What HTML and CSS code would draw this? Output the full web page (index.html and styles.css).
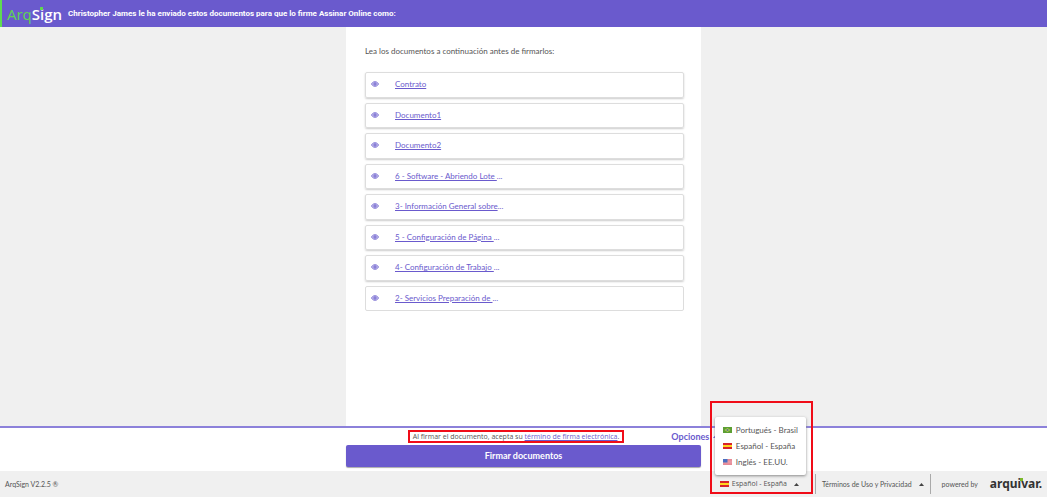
FILE: index.html
```html
<!DOCTYPE html>
<html lang="es">
<head>
<meta charset="utf-8">
<title>ArqSign</title>
<link rel="stylesheet" href="styles.css">
</head>
<body>
<svg class="symbols" aria-hidden="true">
  <symbol id="eye" viewBox="0 0 16 12"><path d="M1 6C3 2.500 5 1.500 8 1.500S13 2.500 15 6C13 9.500 11 10.500 8 10.500S3 9.500 1 6Z" fill="#d9d6f4" stroke="#766bd0" stroke-width="1.800"/><circle cx="8" cy="6" r="2.600" fill="#9d95df" stroke="#766bd0" stroke-width="1.600"/></symbol>
  <symbol id="spain" viewBox="0 0 18 12"><path fill="#d9232b" d="M0 0h18v12H0z"/><path fill="#ffd51f" d="M0 4h18v4H0z"/></symbol>
  <symbol id="brazil" viewBox="0 0 18 12"><path fill="#5c9f34" d="M0 0h18v12H0z"/><path fill="#b9c850" d="M9 2L15 6L9 10L3 6Z"/><circle cx="9" cy="6" r="2.200" fill="#4f7d8c"/></symbol>
  <symbol id="usa" viewBox="0 0 18 12"><path fill="#f3c5cc" d="M0 0h18v12H0z"/><path stroke="#dc5566" stroke-width="1.200" d="M0 .8h18M0 3.400h18M0 6h18M0 8.600h18M0 11.200h18"/><path fill="#4a6fc0" d="M0 0h9v7H0z"/></symbol>
  <symbol id="caret" viewBox="0 0 10 6"><path fill="currentColor" d="M0 6L5 0L10 6Z"/></symbol>
</svg>
<header class="topbar">
  <a class="logo" href="#"><span class="logo-arq">Arq</span><span class="logo-sign">Sign</span><i class="dot logo-dot"></i></a>
  <h1 class="topbar-title">Christopher James le ha enviado estos documentos para que lo firme Assinar Online como:</h1>
</header>
<main class="main">
  <section class="panel">
    <p class="intro">Lea los documentos a continuación antes de firmarlos:</p>
    <ul class="docs">
      <li class="doc"><svg class="eye"><use href="#eye"/></svg><a href="#">Contrato</a></li>
      <li class="doc"><svg class="eye"><use href="#eye"/></svg><a href="#">Documento1</a></li>
      <li class="doc"><svg class="eye"><use href="#eye"/></svg><a href="#">Documento2</a></li>
      <li class="doc"><svg class="eye"><use href="#eye"/></svg><a href="#">6 - Software - Abriendo Lote&nbsp;</a>...</li>
      <li class="doc"><svg class="eye"><use href="#eye"/></svg><a href="#">3- Información General sobre</a>...</li>
      <li class="doc"><svg class="eye"><use href="#eye"/></svg><a href="#">5 - Configuración de Página&nbsp;</a>...</li>
      <li class="doc"><svg class="eye"><use href="#eye"/></svg><a href="#">4- Configuración de Trabajo&nbsp;</a>...</li>
      <li class="doc"><svg class="eye"><use href="#eye"/></svg><a href="#">2- Servicios Preparación de&nbsp;</a>...</li>
    </ul>
  </section>
</main>
<section class="signbar">
  <div class="signbar-row">
    <p class="terms">Al firmar el documento, acepta su <a href="#">término de firma electrónica</a>.</p>
    <button class="options" type="button">Opciones <svg class="caret"><use href="#caret"/></svg></button>
  </div>
  <button class="sign" type="button">Firmar documentos</button>
</section>
<footer class="footer">
  <span class="version">ArqSign V2.2.5 ®</span>
  <div class="language">
    <button class="footer-button language-button" type="button"><svg class="flag"><use href="#spain"/></svg>Español - España<svg class="caret"><use href="#caret"/></svg></button>
    <div class="highlight">
      <div class="menu">
        <button class="menu-item" type="button"><svg class="flag"><use href="#brazil"/></svg>Portugués - Brasil</button>
        <button class="menu-item" type="button"><svg class="flag"><use href="#spain"/></svg>Español - España</button>
        <button class="menu-item" type="button"><svg class="flag"><use href="#usa"/></svg>Inglés - EE.UU.</button>
      </div>
    </div>
  </div>
  <button class="footer-button privacy" type="button">Términos de Uso y Privacidad<svg class="caret"><use href="#caret"/></svg></button>
  <div class="powered">powered by <a class="arquivar" href="#">arquivar.<i class="dot arquivar-dot"></i></a></div>
</footer>
</body>
</html>
```
FILE: styles.css
```css
* { box-sizing: border-box; }
body {
  margin: 0;
  min-height: 100vh;
  display: flex;
  flex-direction: column;
  background: #f0f0f0;
  color: #555;
  font: 8px/12px Lato, sans-serif;
}
h1, p, ul { margin: 0; padding: 0; }
button { margin: 0; padding: 0; border: 0; background: none; color: inherit; font: inherit; white-space: nowrap; }
a { color: #6a5acd; }
.symbols { position: absolute; width: 0; height: 0; }

.topbar {
  height: 27px;
  display: flex;
  align-items: center;
  gap: 6px;
  padding-left: 5px;
  border-left: 2px solid #5fdc50;
  background: #6a5acd;
  color: #fff;
}
.logo { position: relative; font: 15px/24px "Open Sans", sans-serif; text-decoration: none; }
.logo-arq { color: #5fd750; }
.logo-sign { color: #fff; font-weight: 600; }
.topbar-title { font: bold 8px/12px Roboto, sans-serif; }

.main { flex: 1; display: flex; justify-content: center; }
.panel { width: 355px; padding: 18px 17px 0 19px; background: #fff; }
.docs {
  height: 239px;
  margin-top: 15px;
  display: grid;
  grid-auto-rows: 1fr;
  gap: 5px;
  list-style: none;
}
.doc {
  display: flex;
  align-items: center;
  padding: 0 5px 1px;
  border: 1px solid #ddd;
  border-radius: 2px;
  box-shadow: 0 1px 2px #ccc;
  color: #6a5acd;
}
.doc:last-child { box-shadow: none; }
.eye { width: 8px; height: 6px; margin-right: 16px; }

.signbar {
  display: flex;
  flex-direction: column;
  align-items: center;
  padding: 2px 0 4px;
  border-top: 2px solid #8c81da;
  background: #fff;
}
.signbar-row { display: flex; align-items: center; gap: 47px; padding-left: 79px; margin-bottom: 2px; }
.terms { padding: 0 3px; border: 2px solid #f00c18; font: 7px/9px "Open Sans", sans-serif; }
.options { display: flex; align-items: center; gap: 4px; color: #6a5acd; font-size: 9px; font-weight: 700; line-height: 12px; }
.sign {
  width: 355px;
  height: 22px;
  border-radius: 2px;
  box-shadow: 0 1px 1px #aaa;
  background: #6a5acd;
  color: #fff;
  font-size: 9px;
  font-weight: 700;
}

.footer { height: 26px; display: flex; align-items: center; padding: 0 5px; font-size: 7px; }
.version { margin-right: auto; }
.caret { width: 5px; height: 3px; color: #444; }
.options .caret { color: #6a5acd; }
.flag { width: 9px; height: 6px; }
.footer-button { display: flex; align-items: center; height: 20px; }
.language { position: relative; padding-right: 16px; border-right: 1px solid #aaa; }
.language-button { gap: 3px; font: 7px/12px "Open Sans", sans-serif; }
.language-button .caret { margin-left: 4px; }
.highlight {
  position: absolute;
  left: -10px;
  right: 2px;
  bottom: 0;
  height: 93px;
  padding: 14px 5px 0 3px;
  border: 2px solid #f00c18;
  pointer-events: none;
}
.menu {
  display: grid;
  gap: 4px;
  padding: 7px 8px;
  border-radius: 2px;
  background: #fff;
  box-shadow: 0 1px 3px #888;
  font-size: 8px;
  pointer-events: auto;
}
.menu-item { display: flex; align-items: center; gap: 4px; }
.privacy { gap: 7px; padding: 0 6px; border-right: 1px solid #aaa; }
.powered { display: flex; align-items: center; gap: 12px; padding-left: 11px; }
.arquivar {
  position: relative;
  color: #333;
  font: bold 12px/16px "Noto Sans", sans-serif;
  text-decoration: none;
}
.dot { position: absolute; width: 3px; height: 3px; }
.logo-dot { left: 33px; top: 5px; background: #5fd750; }
.arquivar-dot { left: 30px; top: 2px; background: #7bb92a; }
```
